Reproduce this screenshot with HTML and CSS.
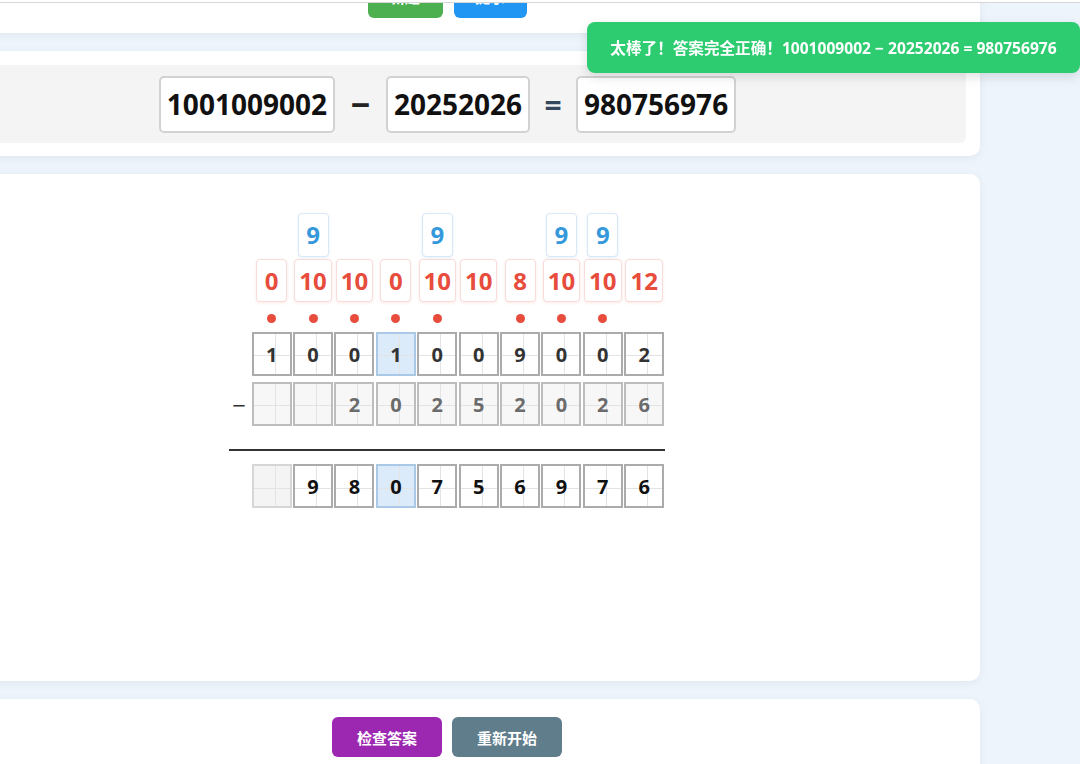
FILE: index.html
```html
<!DOCTYPE html>
<html lang="zh-CN">
<head>
  <meta charset="UTF-8" />
  <meta name="viewport" content="width=device-width, initial-scale=1.0" />
  <title>竖式减法练习</title>
  <link rel="stylesheet" href="styles.css">
</head>
<body>
  <div class="topbar"></div>

  <div class="toast">太棒了！答案完全正确！1001009002 − 20252026 = 980756976</div>

  <div class="page">
    <div class="card card-top">
      <button class="btn btn-green">新题</button>
      <button class="btn btn-blue">提示</button>
    </div>

    <div class="card card-eq">
      <div class="equation">
        <span class="num-box">1001009002</span>
        <span class="op">−</span>
        <span class="num-box">20252026</span>
        <span class="op op-eq">=</span>
        <span class="num-box">980756976</span>
      </div>
    </div>

    <div class="card card-work">
      <div class="calc">
        <!-- borrowed 9s -->
        <div class="row row-nine">
          <span class="sign"></span>
          <span></span>
          <span class="mark blue">9</span>
          <span></span>
          <span></span>
          <span class="mark blue">9</span>
          <span></span>
          <span></span>
          <span class="mark blue">9</span>
          <span class="mark blue">9</span>
          <span></span>
        </div>
        <!-- values after borrowing -->
        <div class="row row-borrow">
          <span class="sign"></span>
          <span class="mark red">0</span>
          <span class="mark red">10</span>
          <span class="mark red">10</span>
          <span class="mark red">0</span>
          <span class="mark red">10</span>
          <span class="mark red">10</span>
          <span class="mark red">8</span>
          <span class="mark red">10</span>
          <span class="mark red">10</span>
          <span class="mark red">12</span>
        </div>
        <div class="row row-dots">
          <span class="sign"></span>
          <span class="dot"></span>
          <span class="dot"></span>
          <span class="dot"></span>
          <span class="dot"></span>
          <span class="dot"></span>
          <span></span>
          <span class="dot"></span>
          <span class="dot"></span>
          <span class="dot"></span>
          <span></span>
        </div>

        <div class="row row-cells">
          <span class="sign"></span>
          <span class="cell">1</span>
          <span class="cell">0</span>
          <span class="cell">0</span>
          <span class="cell active">1</span>
          <span class="cell">0</span>
          <span class="cell">0</span>
          <span class="cell">9</span>
          <span class="cell">0</span>
          <span class="cell">0</span>
          <span class="cell">2</span>
        </div>
        <div class="row row-cells row-sub">
          <span class="sign">−</span>
          <span class="cell"></span>
          <span class="cell"></span>
          <span class="cell">2</span>
          <span class="cell">0</span>
          <span class="cell">2</span>
          <span class="cell">5</span>
          <span class="cell">2</span>
          <span class="cell">0</span>
          <span class="cell">2</span>
          <span class="cell">6</span>
        </div>

        <div class="rule"></div>

        <div class="row row-cells row-ans">
          <span class="sign"></span>
          <span class="cell empty"></span>
          <span class="cell">9</span>
          <span class="cell">8</span>
          <span class="cell active">0</span>
          <span class="cell">7</span>
          <span class="cell">5</span>
          <span class="cell">6</span>
          <span class="cell">9</span>
          <span class="cell">7</span>
          <span class="cell">6</span>
        </div>
      </div>
    </div>

    <div class="card card-actions">
      <button class="btn btn-purple">检查答案</button>
      <button class="btn btn-gray">重新开始</button>
    </div>
  </div>
</body>
</html>
```

FILE: styles.css
```css
* { margin: 0; padding: 0; box-sizing: border-box; }
html, body { overflow: hidden; }
body {
  font-family: "Open Sans", "Noto Sans CJK SC", sans-serif;
  background: #edf4fc;
  color: #222;
  height: 764px;
}
.topbar {
  position: fixed;
  top: 0; left: 0; right: 0;
  height: 3px;
  background: #fff;
  border-bottom: 1px solid #d6d6d6;
  z-index: 5;
}
.toast {
  position: fixed;
  top: 22px;
  right: 0;
  width: 493px;
  height: 51px;
  background: #2ecc71;
  color: #fff;
  border-radius: 8px;
  font-size: 15.6px;
  font-weight: 700;
  display: flex;
  align-items: center;
  justify-content: center;
  box-shadow: 0 4px 12px rgba(0, 0, 0, 0.12);
  z-index: 10;
}

.page {
  width: 1066px;
  margin-left: -86px;
  margin-top: -37px;
}
.card {
  background: #fff;
  border-radius: 10px;
  box-shadow: 0 2px 10px rgba(0, 0, 0, 0.06);
  margin-bottom: 18px;
}

.btn {
  height: 40px;
  border: none;
  border-radius: 6px;
  color: #fff;
  font-family: "Noto Sans CJK SC", sans-serif;
  font-size: 15px;
  font-weight: 700;
  cursor: pointer;
}
.btn-green { background: #4caf50; width: 75px; }
.btn-blue { background: #2196f3; width: 73px; }
.btn-purple { background: #9c27b0; width: 110px; }
.btn-gray { background: #607d8b; width: 110px; }

.card-top {
  height: 70px;
  padding: 15px;
  display: flex;
  justify-content: center;
  gap: 11px;
}
.card-top .btn { padding-bottom: 3px; }

.card-eq { padding: 14px 14px 13px 15px; }
.equation {
  background: #f4f4f4;
  border-radius: 6px;
  height: 78px;
  display: flex;
  align-items: center;
  justify-content: center;
}
.num-box {
  height: 57px;
  padding: 0 6px;
  display: flex;
  align-items: center;
  background: #fff;
  border: 2px solid #d2d2d2;
  border-radius: 5px;
  font-size: 28px;
  font-weight: 700;
  color: #111;
}
.op {
  width: 51px;
  text-align: center;
  font-size: 34px;
  font-weight: 700;
  color: #222;
}
.op-eq { width: 46px; font-size: 30px; color: #34495e; }

.card-work {
  height: 507px;
  padding-top: 39px;
  display: flex;
  justify-content: center;
}
.calc { width: 436px; }
.row {
  display: grid;
  grid-template-columns: 22px repeat(10, 41.4px);
  align-items: center;
  justify-items: center;
}
.row-nine { height: 44px; margin-bottom: 2px; }
.row-borrow { height: 43px; }
.row-dots { height: 30px; }

.mark {
  min-width: 31px;
  padding: 0 4px;
  background: #fff;
  border-radius: 4px;
  font-size: 24px;
  font-weight: 700;
  text-align: center;
}
.mark.blue {
  height: 44px;
  line-height: 42px;
  color: #3498db;
  border: 1px solid #d9e8f6;
  box-shadow: 0 1px 3px rgba(52, 152, 219, 0.12);
}
.mark.red {
  height: 43px;
  line-height: 41px;
  color: #e74c3c;
  border: 1px solid #f7dcda;
  box-shadow: 0 1px 3px rgba(231, 76, 60, 0.12);
}
.dot {
  width: 9px;
  height: 9px;
  border-radius: 50%;
  background: #e74c3c;
  margin-top: 2px;
}

.row-cells { height: 44px; }
.row-sub { margin-top: 6px; }
.sign {
  font-size: 24px;
  color: #333;
  justify-self: end;
  padding-right: 5px;
}
.cell {
  width: 40px;
  height: 44px;
  border: 2px solid #ababab;
  background-color: #fff;
  background-image:
    linear-gradient(to right, transparent calc(60% - 0.5px), #e3e3e3 calc(60% - 0.5px), #e3e3e3 calc(60% + 0.5px), transparent calc(60% + 0.5px)),
    linear-gradient(to bottom, transparent calc(55% - 0.5px), #e3e3e3 calc(55% - 0.5px), #e3e3e3 calc(55% + 0.5px), transparent calc(55% + 0.5px));
  display: flex;
  align-items: center;
  justify-content: center;
  font-size: 20px;
  font-weight: 700;
  color: #333;
}
.row-sub .cell {
  background-color: #f7f7f7;
  border-color: #bdbdbd;
  color: #6b6b6b;
}
.row-ans .cell { color: #111; }
.cell.active {
  background-color: #dcebf9;
  border-color: #a9c9e6;
}
.cell.empty {
  background-color: #f4f4f4;
  border-color: #d6d6d6;
}
.rule {
  height: 2px;
  background: #333;
  margin: 23px 0 13px;
}

.card-actions {
  height: 80px;
  padding-top: 18px;
  display: flex;
  justify-content: center;
  gap: 10px;
}
```
